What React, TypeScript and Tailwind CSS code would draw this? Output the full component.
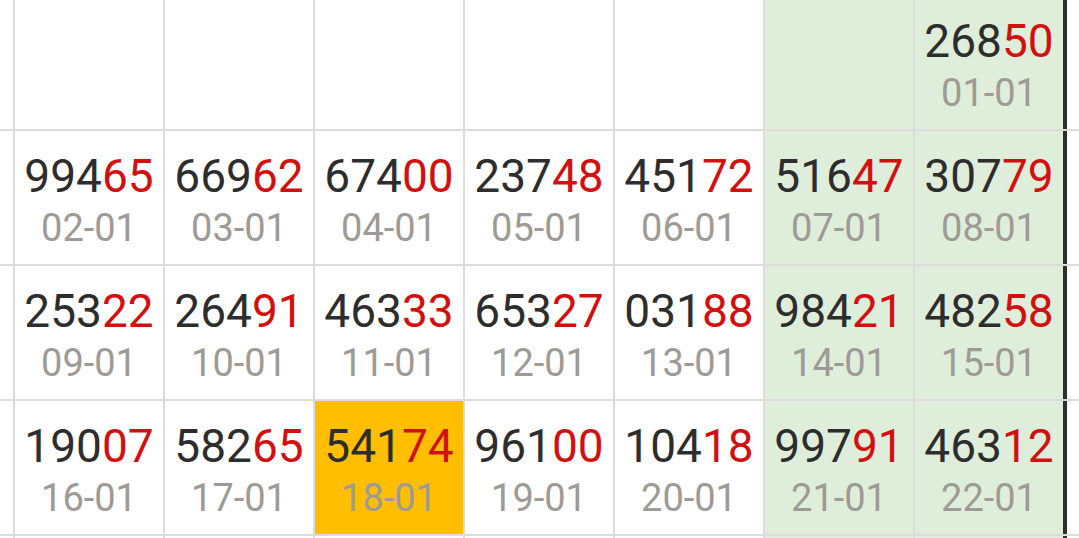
import React from 'react';

type Cell = { num: string; date: string } | null;

const ROWS: Cell[][] = [
  [null, null, null, null, null, null, { num: '26850', date: '01-01' }],
  [
    { num: '99465', date: '02-01' },
    { num: '66962', date: '03-01' },
    { num: '67400', date: '04-01' },
    { num: '23748', date: '05-01' },
    { num: '45172', date: '06-01' },
    { num: '51647', date: '07-01' },
    { num: '30779', date: '08-01' },
  ],
  [
    { num: '25322', date: '09-01' },
    { num: '26491', date: '10-01' },
    { num: '46333', date: '11-01' },
    { num: '65327', date: '12-01' },
    { num: '03188', date: '13-01' },
    { num: '98421', date: '14-01' },
    { num: '48258', date: '15-01' },
  ],
  [
    { num: '19007', date: '16-01' },
    { num: '58265', date: '17-01' },
    { num: '54174', date: '18-01' },
    { num: '96100', date: '19-01' },
    { num: '10418', date: '20-01' },
    { num: '99791', date: '21-01' },
    { num: '46312', date: '22-01' },
  ],
  [null, null, null, null, null, null, null],
];

// today's cell
const TODAY = '18-01';

function DayCell({ cell, col }: { cell: Cell; col: number }) {
  const weekend = col >= 5;
  const today = cell?.date === TODAY;
  const bg = today ? 'bg-[#ffbf00]' : weekend ? 'bg-[#dfeedb]' : 'bg-white';
  const border =
    col === 6
      ? 'w-[152px] border-r-4 border-r-[#2e2e2e]'
      : 'w-[150px] border-r-2 border-r-[#dcdcdc]';

  return (
    <div className={`${bg} ${border} box-border shrink-0 flex flex-col items-center justify-center pt-[5px]`}>
      {cell && (
        <>
          <div className="text-[46px] leading-[55px]">
            <span className="text-[#2d2d2d]">{cell.num.slice(0, 3)}</span>
            <span className="text-[#d2100f]">{cell.num.slice(3)}</span>
          </div>
          <div className="text-[38px] leading-[48px] text-[#9e9a95]">{cell.date}</div>
        </>
      )}
    </div>
  );
}

export default function App() {
  return (
    <div
      className="w-[1079px] h-[538px] overflow-hidden bg-white"
      style={{ fontFamily: 'Roboto, "Noto Sans", sans-serif' }}
    >
      <div className="-mt-[4px] flex flex-col">
        {ROWS.map((row, r) => (
          <div key={r} className="flex h-[135px] shrink-0 border-b-2 border-[#dcdcdc]">
            <div className="w-[13px] shrink-0 border-r-2 border-[#dcdcdc] box-content" />
            {row.map((cell, c) => (
              <DayCell key={c} cell={cell} col={c} />
            ))}
            <div className="flex-1 bg-white" />
          </div>
        ))}
      </div>
    </div>
  );
}
